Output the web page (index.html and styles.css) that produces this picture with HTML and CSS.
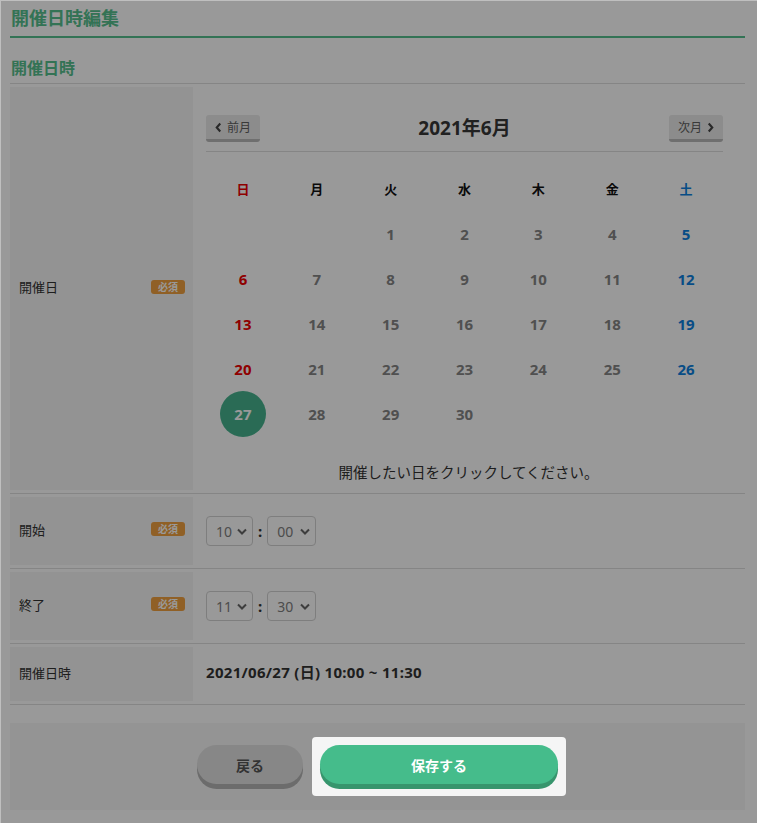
FILE: index.html
```html
<!DOCTYPE html>
<html lang="ja">
<head>
<meta charset="utf-8">
<title>開催日時編集</title>
<link rel="stylesheet" href="styles.css">
</head>
<body>
<div class="page">
  <h1 class="page-title">開催日時編集</h1>
  <h2 class="section-title">開催日時</h2>

  <div class="form-row">
    <div class="label-cell"><span>開催日</span><span class="badge">必須</span></div>
    <div class="value-cell cal-cell">
      <div class="calendar">
        <div class="cal-nav">
          <button class="nav-btn"><svg class="chev" viewBox="0 0 8 12" width="7" height="11"><path d="M6 1.5 L2 6 L6 10.5" fill="none" stroke="currentColor" stroke-width="2.4"/></svg>前月</button>
          <div class="cal-title">2021年6月</div>
          <button class="nav-btn">次月<svg class="chev" viewBox="0 0 8 12" width="7" height="11"><path d="M2 1.5 L6 6 L2 10.5" fill="none" stroke="currentColor" stroke-width="2.4"/></svg></button>
        </div>
        <div class="cal-grid">
          <div class="wd sun">日</div><div class="wd">月</div><div class="wd">火</div><div class="wd">水</div><div class="wd">木</div><div class="wd">金</div><div class="wd sat">土</div>
          <div></div><div></div><div class="d">1</div><div class="d">2</div><div class="d">3</div><div class="d">4</div><div class="d sat">5</div>
          <div class="d sun">6</div><div class="d">7</div><div class="d">8</div><div class="d">9</div><div class="d">10</div><div class="d">11</div><div class="d sat">12</div>
          <div class="d sun">13</div><div class="d">14</div><div class="d">15</div><div class="d">16</div><div class="d">17</div><div class="d">18</div><div class="d sat">19</div>
          <div class="d sun">20</div><div class="d">21</div><div class="d">22</div><div class="d">23</div><div class="d">24</div><div class="d">25</div><div class="d sat">26</div>
          <div class="d"><span class="selected">27</span></div><div class="d">28</div><div class="d">29</div><div class="d">30</div><div></div><div></div><div></div>
        </div>
        <p class="cal-msg">開催したい日をクリックしてください。</p>
      </div>
    </div>
  </div>

  <div class="form-row">
    <div class="label-cell"><span>開始</span><span class="badge">必須</span></div>
    <div class="value-cell time-cell">
      <select class="sel"><option>10</option></select>
      <span class="colon">:</span>
      <select class="sel"><option>00</option></select>
    </div>
  </div>

  <div class="form-row">
    <div class="label-cell"><span>終了</span><span class="badge">必須</span></div>
    <div class="value-cell time-cell">
      <select class="sel"><option>11</option></select>
      <span class="colon">:</span>
      <select class="sel"><option>30</option></select>
    </div>
  </div>

  <div class="form-row">
    <div class="label-cell"><span>開催日時</span></div>
    <div class="value-cell summary">2021/06/27 (日) 10:00 ~ 11:30</div>
  </div>

  <div class="actions">
    <button class="btn btn-back">戻る</button>
    <div class="spotlight"><button class="btn btn-save">保存する</button></div>
  </div>
</div>
<div class="overlay"></div>
</body>
</html>
```

FILE: styles.css
```css
* { box-sizing: border-box; }
html, body { margin: 0; padding: 0; background: #fff; }
body {
  font-family: "Noto Sans", "Noto Sans CJK JP", sans-serif;
  color: #333;
  font-size: 13px;
}
.page {
  width: 735px;
  margin-left: 10px;
}
.page-title {
  margin: 0;
  padding: 6px 0 6px 1px;
  font-size: 18px;
  line-height: 24px;
  font-weight: 700;
  color: #56c08e;
  border-bottom: 2px solid #56c08e;
}
.section-title {
  margin: 19px 0 0;
  padding: 0 0 4px 1px;
  font-size: 16px;
  line-height: 22px;
  font-weight: 700;
  color: #56c08e;
  border-bottom: 1px solid #dedede;
}
.form-row {
  display: grid;
  grid-template-columns: 183px 1fr;
  column-gap: 13px;
  padding: 3px 0 3px;
  border-bottom: 1px solid #dedede;
}
.label-cell {
  background: #f5f5f5;
  display: flex;
  align-items: center;
  justify-content: space-between;
  padding: 0 8px 4px 9px;
  font-size: 13px;
  color: #333;
}
.badge {
  background: #f0a040;
  color: #fff;
  font-size: 10px;
  font-weight: 700;
  line-height: 14px;
  padding: 0 7px;
  border-radius: 3px;
}
.cal-cell { padding: 28px 0 8px; }
.calendar { width: 517px; }
.cal-nav {
  display: flex;
  align-items: center;
  justify-content: space-between;
  padding-bottom: 9px;
  border-bottom: 1px solid #dedede;
}
.nav-btn {
  display: flex;
  align-items: center;
  gap: 5px;
  height: 27px;
  padding: 0 9px;
  border: 0;
  border-bottom: 3px solid #b9b9b9;
  border-radius: 3px;
  background: #e9e9e9;
  color: #606060;
  font-family: inherit;
  font-size: 12px;
}
.nav-btn .chev { color: #444; }
.cal-title {
  font-size: 19px;
  font-weight: 700;
  color: #383838;
  line-height: 27px;
}
.cal-grid {
  margin-top: 14px;
  display: grid;
  grid-template-columns: repeat(7, 1fr);
  grid-auto-rows: 45px;
}
.cal-grid > div {
  display: flex;
  align-items: center;
  justify-content: center;
}
.wd {
  font-size: 13px;
  font-weight: 700;
  color: #111;
}
.d {
  font-size: 15px;
  font-weight: 700;
  color: #858585;
}
.sun { color: #ee0000; }
.sat { color: #0d80e0; }
.selected {
  width: 46px;
  height: 46px;
  flex: none;
  border-radius: 50%;
  background: #46b38e;
  color: #fff;
  display: flex;
  align-items: center;
  justify-content: center;
}
.cal-msg {
  margin: 26px 0 0;
  padding-left: 8px;
  text-align: center;
  font-size: 14.5px;
  line-height: 20px;
  color: #333;
}
.time-cell {
  display: flex;
  align-items: center;
  gap: 5px;
  padding: 19px 0 19px;
}
.sel {
  appearance: none;
  -webkit-appearance: none;
  width: 47px;
  height: 30px;
  padding: 0 0 0 9px;
  border: 1px solid #d2d2d2;
  border-radius: 4px;
  background: #fff url("data:image/svg+xml;utf8,<svg xmlns='http://www.w3.org/2000/svg' width='10' height='7' viewBox='0 0 10 7'><path d='M1 1.5 L5 5.5 L9 1.5' fill='none' stroke='%23666' stroke-width='2'/></svg>") no-repeat right 5px center;
  font-family: inherit;
  font-size: 14px;
  color: #808080;
}
.time-cell .sel + .colon + .sel { width: 49px; }
.colon {
  font-size: 15px;
  font-weight: 700;
  color: #333;
}
.summary {
  padding: 15px 0 18px;
  font-size: 15px;
  line-height: 21px;
  font-weight: 700;
  letter-spacing: 0.3px;
  color: #333;
}
.actions {
  margin-top: 18px;
  background: #f7f7f7;
  display: flex;
  justify-content: center;
  align-items: flex-start;
  gap: 17px;
  padding: 22px 0 21px;
}
.btn {
  height: 39px;
  border: 0;
  border-radius: 20px;
  font-family: inherit;
  font-size: 14px;
  font-weight: 700;
  margin-bottom: 5px;
}
.btn-back {
  width: 106px;
  background: #e2e2e2;
  color: #555;
  box-shadow: 0 5px 0 #b4b4b4;
}
.spotlight {
  position: relative;
  z-index: 20;
  margin: -8px -8px -12px;
  padding: 8px 8px 7px;
  background: #f5f5f5;
  border-radius: 4px;
}
.btn-save {
  display: block;
  width: 238px;
  background: #45bc8b;
  color: #fff;
  box-shadow: 0 5px 0 #37956d;
}
.overlay {
  position: fixed;
  inset: 0;
  z-index: 10;
  background: rgba(0, 0, 0, 0.4);
  background-clip: padding-box;
  border-top: 1px solid rgba(0, 0, 0, 0.25);
  border-left: 1px solid rgba(0, 0, 0, 0.25);
}
```
